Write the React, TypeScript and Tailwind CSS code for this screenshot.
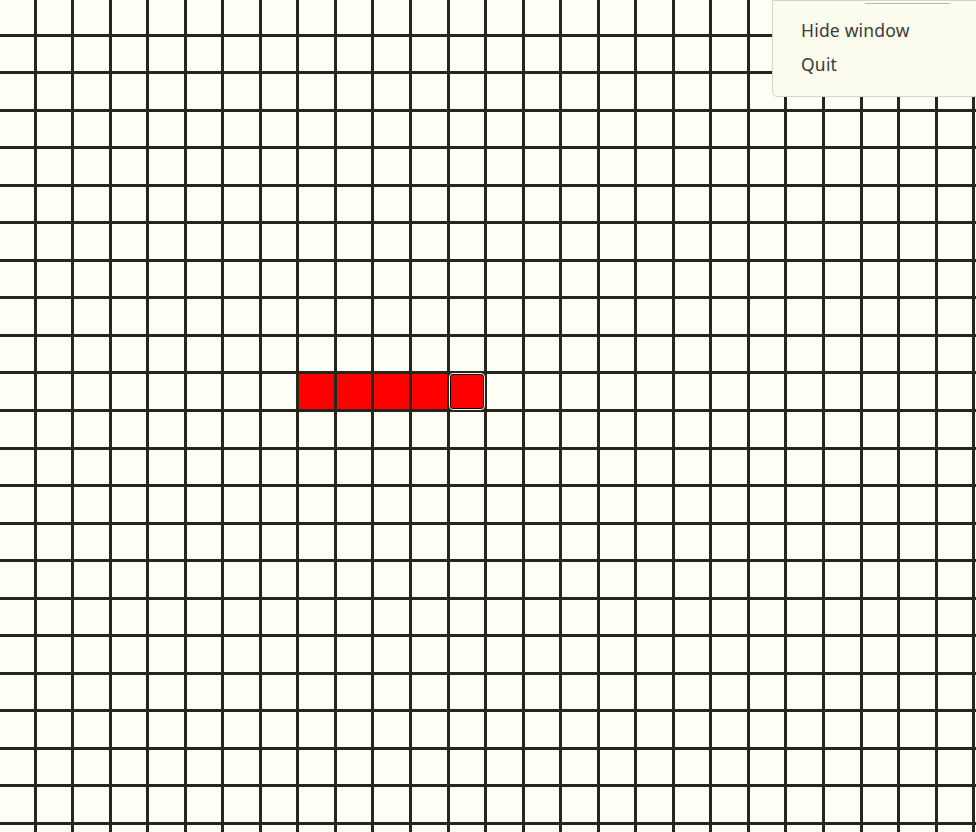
import React from 'react'

const COLS = 27
const ROWS = 23
const SNAKE_ROW = 10
const SNAKE_COLS = [8, 9, 10, 11, 12]
const HEAD_COL = 12

const Cell = ({ row, col }: { row: number; col: number }) => {
  const isSnake = row === SNAKE_ROW && SNAKE_COLS.includes(col)
  const isHead = isSnake && col === HEAD_COL

  if (isHead) {
    return (
      <div className='bg-[#fe0000] rounded-[3px] border border-black outline outline-1 outline-[#f4f4f4]' />
    )
  }
  if (isSnake) {
    return <div className='bg-[#fe0000]' />
  }
  return <div className='bg-[#fffff6]' />
}

const App = () => {
  const cells = []
  for (let r = 0; r < ROWS; r++) {
    for (let c = 0; c < COLS; c++) {
      cells.push(<Cell key={`${r}-${c}`} row={r} col={c} />)
    }
  }

  return (
    <div className='relative w-[976px] h-[832px] overflow-hidden bg-[#fffff6] font-["Noto_Sans","Open_Sans",sans-serif]'>
      {/* board */}
      <div className='-ml-[1px] -mt-[1px] w-max grid grid-cols-[repeat(27,34.55px)] auto-rows-[34.55px] gap-[3px] bg-[#26261d]'>
        {cells}
      </div>

      {/* popup menu */}
      <div className='absolute top-0 left-[772px] w-[220px] h-[97px] bg-[#fcfcee] border border-[#d6d6c6] rounded-bl-[5px]'>
        <div className='ml-[92px] mt-[2px] w-[85px] h-px bg-[#b9b9ad]' />
        <div className='flex flex-col pl-[28px] pt-[14px] gap-[9px] text-[17.5px] leading-[25px] tracking-[0.2px] text-[#3a3a3a]'>
          <span>Hide window</span>
          <span>Quit</span>
        </div>
      </div>
    </div>
  )
}

export default App
